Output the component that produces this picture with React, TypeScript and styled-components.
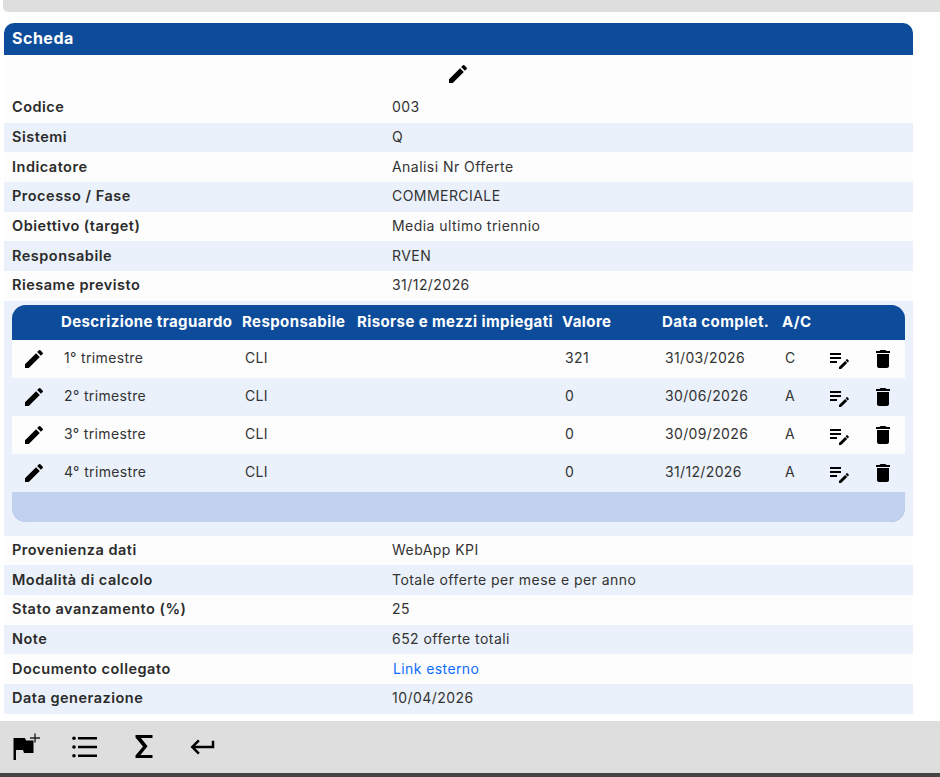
import { createGlobalStyle } from "styled-components";
import styled from "styled-components";
import { MdEdit, MdDelete, MdKeyboardReturn } from "react-icons/md";

const GlobalStyle = createGlobalStyle`
  html, body {
    margin: 0;
    padding: 0;
    background: #fff;
    overflow: hidden;
  }
  body {
    font-family: "Inter", "Open Sans", sans-serif;
    color: #333;
  }
`;

const Page = styled.div`
  width: 940px;
  height: 777px;
  display: flex;
  flex-direction: column;
`;

const TopBar = styled.div`
  height: 12px;
  margin-left: 3px;
  background: #dedede;
  border-bottom-left-radius: 5px;
`;

const Card = styled.div`
  width: 909px;
  margin: 11px 0 0 4px;
`;

const CardHeader = styled.div`
  height: 32px;
  display: flex;
  align-items: center;
  padding: 0 0 2px 8px;
  box-sizing: border-box;
  background: #0d4c9b;
  color: #fff;
  font-size: 16px;
  font-weight: 700;
  letter-spacing: 0.5px;
  border-radius: 10px 10px 0 0;
`;

const EditRow = styled.div`
  height: 38px;
  display: flex;
  justify-content: center;
  align-items: center;
  font-size: 24px;
  color: #000;
  background: #fdfdfd;
  padding-right: 1px;
`;

const InfoRow = styled.div<{ $alt?: boolean }>`
  height: 29.67px;
  display: flex;
  align-items: center;
  padding-bottom: 2px;
  box-sizing: border-box;
  font-size: 14px;
  background: ${(p) => (p.$alt ? "#eaf1fa" : "#fdfdfd")};
`;

const Label = styled.div`
  width: 388px;
  padding-left: 8px;
  box-sizing: border-box;
  font-size: 14.5px;
  font-weight: 600;
  letter-spacing: 0.5px;
  color: #2b2b2b;
`;

const Value = styled.div`
  letter-spacing: 0.45px;
`;

const Link = styled.a`
  color: #0d6efd;
  text-decoration: none;
  margin-left: 1px;
  letter-spacing: 0.4px;
`;

const TableWrap = styled.div`
  padding: 4px 8px 14px;
  background: #eaf1fa;
`;

const Table = styled.div`
  border-radius: 14px;
  overflow: hidden;
  background: #a9b6dd;
`;

const columns = "46px 181px 115px 205px 100px 120px 45px 45px 36px";

const HeadRow = styled.div`
  height: 35px;
  display: grid;
  grid-template-columns: ${columns};
  background: #0d4c9b;
  color: #fff;
  font-size: 15px;
  font-weight: 700;
  letter-spacing: 0.4px;
  line-height: 33px;
`;

const HeadCell = styled.div`
  padding-left: 3px;
  white-space: nowrap;
`;

const BodyRow = styled.div<{ $alt?: boolean }>`
  height: 38px;
  display: grid;
  grid-template-columns: ${columns};
  align-items: center;
  font-size: 14px;
  background: ${(p) => (p.$alt ? "#eaf1fa" : "#fdfdfd")};
`;

const Cell = styled.div`
  padding: 0 0 2px 6px;
  letter-spacing: 0.35px;
  white-space: nowrap;
`;

const IconCell = styled.div<{ $offset?: number }>`
  display: flex;
  align-items: center;
  padding-left: ${(p) => p.$offset ?? 0}px;
  font-size: 24px;
  color: #000;
`;

const TableFoot = styled.div`
  height: 30px;
  background: #c1d1f0;
  border-radius: 0 0 15px 15px;
`;

const BottomBar = styled.div`
  margin-top: 7.33px;
  height: 52px;
  display: flex;
  align-items: center;
  gap: 29px;
  padding-left: 11px;
  background: #dedede;
  color: #000;
  font-size: 30px;
  border-bottom: 4px solid #444;
`;

const BarIcon = styled.span`
  display: flex;
  width: 30px;
  justify-content: center;
`;

const PlaylistEdit = () => (
  <svg width="24" height="24" viewBox="0 0 24 24" fill="currentColor">
    <path d="M3 6V8H14V6H3M3 10V12H14V10H3M20 12.1C19.9 12.1 19.7 12.2 19.6 12.3L18.6 13.3L20.7 15.4L21.7 14.4C21.9 14.2 21.9 13.8 21.7 13.6L20.4 12.3C20.3 12.2 20.2 12.1 20 12.1M18.1 13.9L12 19.9V22H14.1L20.2 15.9L18.1 13.9M3 14V16H10V14H3Z" />
  </svg>
);

const FlagPlus = () => (
  <svg width="30" height="30" viewBox="0 0 30 30" fill="#000">
    <path d="M2.500 6H5V28H2.500z" />
    <path d="M3 6H14L15 8.500H22.500V21H13L12 18H3z" />
    <path d="M23.300 1.500H24.700V5.300H29V6.700H24.700V10.500H23.300V6.700H19V5.300H23.300z" fill="#222" />
  </svg>
);

const BulletList = () => (
  <svg width="30" height="30" viewBox="0 0 30 30" fill="#000">
    <circle cx="4" cy="6.300" r="1.800" />
    <circle cx="4" cy="15" r="1.800" />
    <circle cx="4" cy="23.700" r="1.800" />
    <path d="M8 5H27V7.600H8zM8 13.700H27V16.300H8zM8 22.400H27V25H8z" />
  </svg>
);

const Sigma = () => (
  <svg width="30" height="30" viewBox="0 0 30 30" fill="#000">
    <path d="M6.500 3H23.500V6H12L18.500 14.300L11.500 23H23.500V26H6.500V23.500L14 14.500L6.500 5.500z" />
  </svg>
);

const topRows = [
  ["Codice", "003"],
  ["Sistemi", "Q"],
  ["Indicatore", "Analisi Nr Offerte"],
  ["Processo / Fase", "COMMERCIALE"],
  ["Obiettivo (target)", "Media ultimo triennio"],
  ["Responsabile", "RVEN"],
  ["Riesame previsto", "31/12/2026"],
];

const milestones = [
  ["1° trimestre", "CLI", "", "321", "31/03/2026", "C"],
  ["2° trimestre", "CLI", "", "0", "30/06/2026", "A"],
  ["3° trimestre", "CLI", "", "0", "30/09/2026", "A"],
  ["4° trimestre", "CLI", "", "0", "31/12/2026", "A"],
];

const headers = ["", "Descrizione traguardo", "Responsabile", "Risorse e mezzi impiegati", "Valore", "Data complet.", "A/C", "", ""];

export default function App() {
  return (
    <Page>
      <GlobalStyle />
      <TopBar />
      <Card>
        <CardHeader>Scheda</CardHeader>
        <EditRow>
          <MdEdit />
        </EditRow>
        {topRows.map(([label, value], i) => (
          <InfoRow key={label} $alt={i % 2 === 1}>
            <Label>{label}</Label>
            <Value>{value}</Value>
          </InfoRow>
        ))}
        <TableWrap>
          <Table>
            <HeadRow>
              {headers.map((h, i) => (
                <HeadCell key={i}>{h}</HeadCell>
              ))}
            </HeadRow>
            {milestones.map((row, i) => (
              <BodyRow key={row[0]} $alt={i % 2 === 1}>
                <IconCell $offset={10}>
                  <MdEdit />
                </IconCell>
                {row.map((c, j) => (
                  <Cell key={j}>{c}</Cell>
                ))}
                <IconCell $offset={3}>
                  <PlaylistEdit />
                </IconCell>
                <IconCell $offset={2}>
                  <MdDelete />
                </IconCell>
              </BodyRow>
            ))}
            <TableFoot />
          </Table>
        </TableWrap>
        <InfoRow>
          <Label>Provenienza dati</Label>
          <Value>WebApp KPI</Value>
        </InfoRow>
        <InfoRow $alt>
          <Label>Modalità di calcolo</Label>
          <Value>Totale offerte per mese e per anno</Value>
        </InfoRow>
        <InfoRow>
          <Label>Stato avanzamento (%)</Label>
          <Value>25</Value>
        </InfoRow>
        <InfoRow $alt>
          <Label>Note</Label>
          <Value>652 offerte totali</Value>
        </InfoRow>
        <InfoRow>
          <Label>Documento collegato</Label>
          <Link href="#">Link esterno</Link>
        </InfoRow>
        <InfoRow $alt>
          <Label>Data generazione</Label>
          <Value>10/04/2026</Value>
        </InfoRow>
      </Card>
      <BottomBar>
        <BarIcon>
          <FlagPlus />
        </BarIcon>
        <BarIcon>
          <BulletList />
        </BarIcon>
        <BarIcon>
          <Sigma />
        </BarIcon>
        <BarIcon>
          <MdKeyboardReturn />
        </BarIcon>
      </BottomBar>
    </Page>
  );
}
